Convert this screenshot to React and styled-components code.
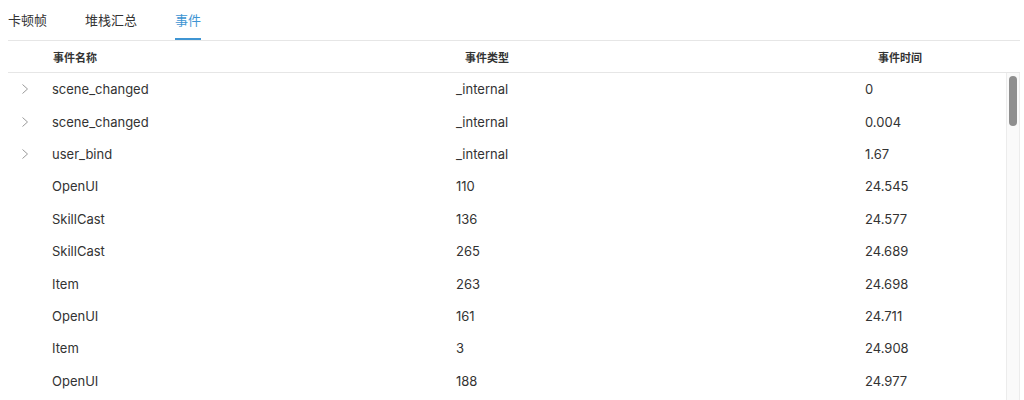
import React from "react";
import styled, { createGlobalStyle } from "styled-components";

const Global = createGlobalStyle`
  html, body { margin: 0; padding: 0; background: #fff; }
  body { font-family: Inter, "Noto Sans CJK SC", sans-serif; color: #333; overflow: hidden; }
`;

const Page = styled.div`
  padding: 0 4px 0 8px;
  height: 400px;
  display: flex;
  flex-direction: column;
  overflow: hidden;
`;

const TabBar = styled.div`
  display: flex;
  gap: 38px;
  height: 40px;
  border-bottom: 1px solid #e6e6e6;
`;

const Tab = styled.div`
  position: relative;
  font-size: 13px;
  line-height: 40px;
  color: ${(p) => (p.$active ? "#3f95d3" : "#333")};
  font-family: "Noto Sans CJK SC", sans-serif;
  &::after {
    content: "";
    display: ${(p) => (p.$active ? "block" : "none")};
    position: absolute;
    left: 0;
    right: 0;
    bottom: 0;
    height: 2px;
    background: #3f95d3;
  }
`;

const cols = "44px 404px 409px 1fr";

const HeaderRow = styled.div`
  display: grid;
  grid-template-columns: ${cols} 14px;
  height: 31px;
  align-items: center;
  border-bottom: 1px solid #e6e6e6;
`;

const HeaderCell = styled.div`
  font-size: 11px;
  font-weight: 600;
  color: #333;
  padding-left: ${(p) => p.$pad || 0}px;
  font-family: "Noto Sans CJK SC", sans-serif;
`;

const Body = styled.div`
  display: flex;
  flex: 1;
  min-height: 0;
`;

const Rows = styled.div`
  flex: 1;
  display: flex;
  flex-direction: column;
`;

const Row = styled.div`
  display: grid;
  grid-template-columns: ${cols};
  height: 32.4px;
  flex: none;
  align-items: center;
  font-size: 13px;
  color: #333;
`;

const Cell = styled.div`
  white-space: nowrap;
`;

const ExpandCell = styled.div`
  display: flex;
  align-items: center;
  padding-left: 12px;
  color: #999;
`;

const Track = styled.div`
  width: 12px;
  border-left: 1px solid #ececec;
  border-right: 1px solid #ececec;
  background: #fafafa;
  display: flex;
  justify-content: center;
`;

const Thumb = styled.div`
  margin-top: 3px;
  width: 8px;
  height: 50px;
  border-radius: 4px;
  background: #8f8f8f;
`;

const Chevron = () => (
  <svg width="10" height="12" viewBox="0 0 10 12" fill="none">
    <path d="M2.5 1.5 L7.5 6 L2.5 10.5" stroke="#9a9a9a" strokeWidth="1" />
  </svg>
);

const data = [
  ["scene_changed", "_internal", "0", true],
  ["scene_changed", "_internal", "0.004", true],
  ["user_bind", "_internal", "1.67", true],
  ["OpenUI", "110", "24.545"],
  ["SkillCast", "136", "24.577"],
  ["SkillCast", "265", "24.689"],
  ["Item", "263", "24.698"],
  ["OpenUI", "161", "24.711"],
  ["Item", "3", "24.908"],
  ["OpenUI", "188", "24.977"],
];

export default function App() {
  return (
    <>
      <Global />
      <Page>
        <TabBar>
          <Tab>卡顿帧</Tab>
          <Tab>堆栈汇总</Tab>
          <Tab $active>事件</Tab>
        </TabBar>
        <HeaderRow>
          <div />
          <HeaderCell $pad={1}>事件名称</HeaderCell>
          <HeaderCell $pad={9}>事件类型</HeaderCell>
          <HeaderCell $pad={13}>事件时间</HeaderCell>
          <div />
        </HeaderRow>
        <Body>
          <Rows>
            {data.map(([name, type, time, exp], i) => (
              <Row key={i}>
                <ExpandCell>{exp ? <Chevron /> : null}</ExpandCell>
                <Cell>{name}</Cell>
                <Cell>{type}</Cell>
                <Cell>{time}</Cell>
              </Row>
            ))}
          </Rows>
          <Track>
            <Thumb />
          </Track>
        </Body>
      </Page>
    </>
  );
}
